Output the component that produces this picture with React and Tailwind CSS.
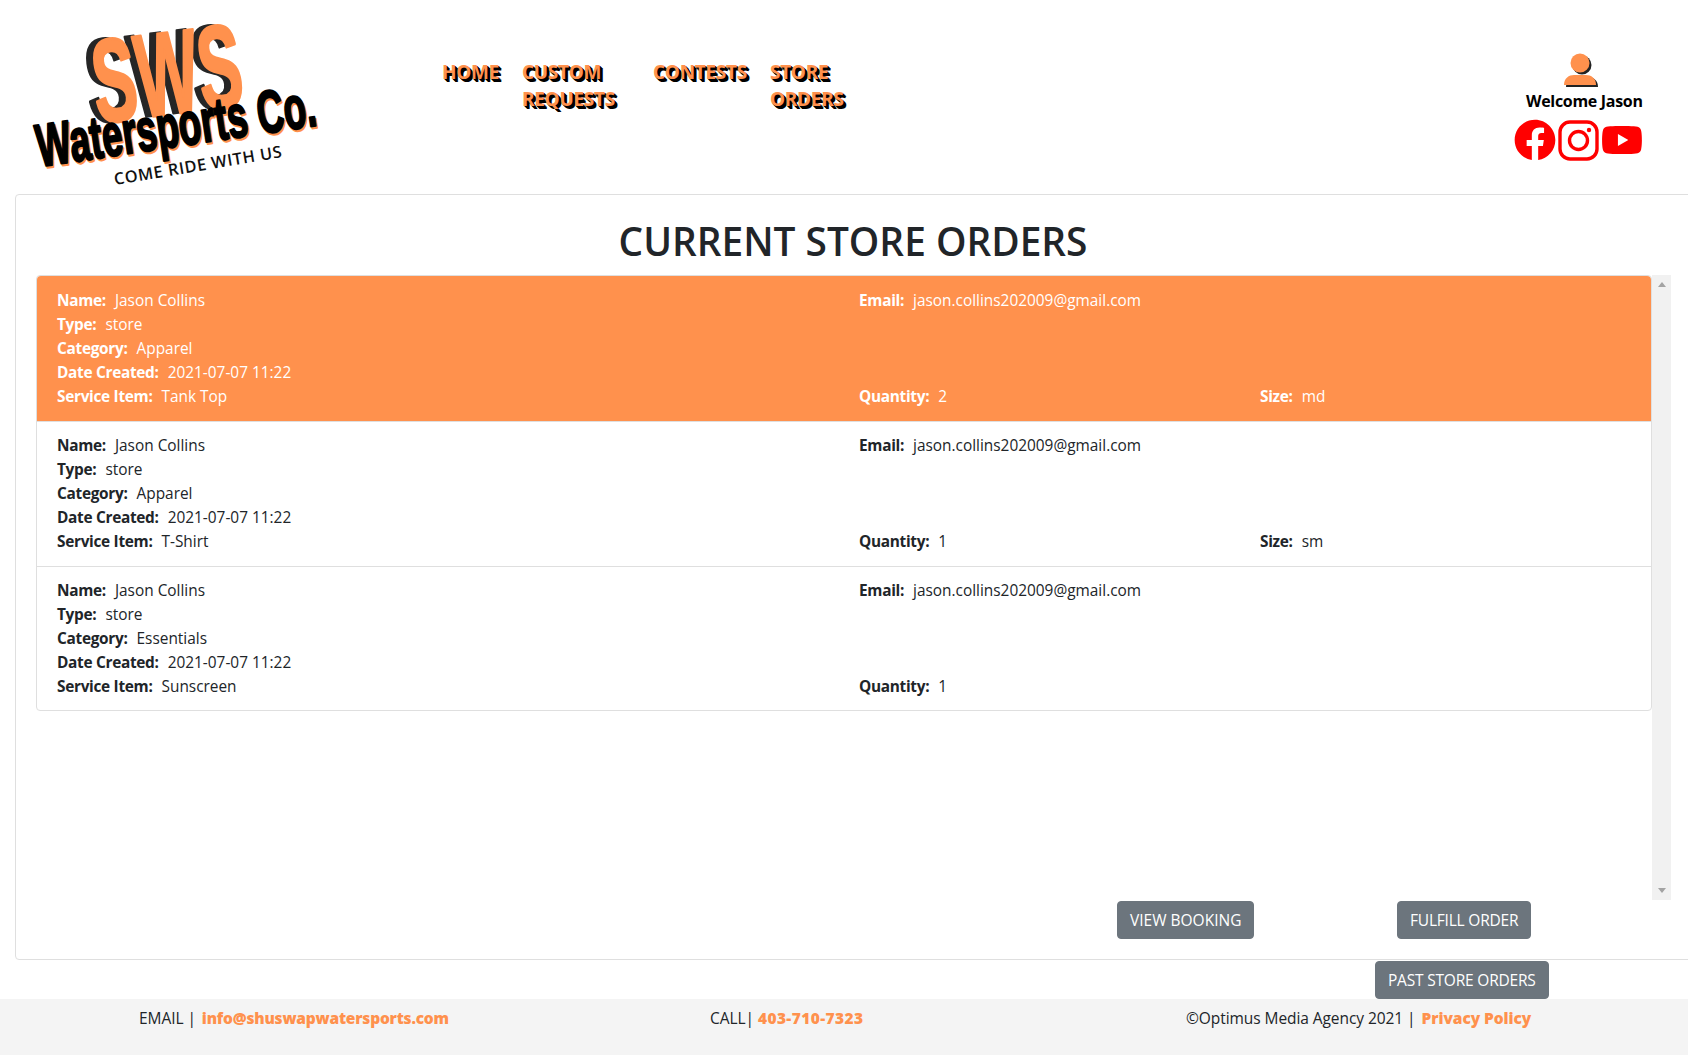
import { FaFacebook, FaYoutube } from "react-icons/fa";

const orders = [
  { item: "Tank Top", category: "Apparel", qty: 2, size: "md", active: true },
  { item: "T-Shirt", category: "Apparel", qty: 1, size: "sm" },
  { item: "Sunscreen", category: "Essentials", qty: 1 },
];

function Field({ label, value }) {
  return (
    <div className="whitespace-nowrap">
      <span className="font-bold tracking-[-0.3px]">{label}:</span>
      <span className="ml-[9px]">{value}</span>
    </div>
  );
}

function Logo() {
  const bold = { fontFamily: "'Liberation Sans', sans-serif", fontWeight: 700, textAnchor: "middle" };
  return (
    <svg width="340" height="190" viewBox="0 0 340 190" className="shrink-0">
      <g style={bold} fontSize="118" strokeWidth="3" strokeLinejoin="round">
        <text transform="translate(165 114) rotate(-7)" textLength="150" lengthAdjust="spacingAndGlyphs" fill="#262626" stroke="#262626">SWS</text>
        <text transform="translate(172 114) rotate(-7)" textLength="150" lengthAdjust="spacingAndGlyphs" fill="#ff914d" stroke="#ff914d">SWS</text>
      </g>
      <g style={bold} fontSize="60" strokeWidth="2.2" strokeLinejoin="round">
        <text transform="translate(180.5 148) rotate(-8.5)" textLength="282" lengthAdjust="spacingAndGlyphs" fill="#ff914d" stroke="#ff914d">Watersports Co.</text>
        <text transform="translate(179 146) rotate(-8.5)" textLength="282" lengthAdjust="spacingAndGlyphs" fill="#000" stroke="#000">Watersports Co.</text>
      </g>
      <text transform="translate(199 171) rotate(-9.5)" fontFamily="'Open Sans', sans-serif" fontWeight="600" fontSize="16.4" letterSpacing="0.6" textAnchor="middle" fill="#111">COME RIDE WITH US</text>
    </svg>
  );
}

function NavLink({ className, children }) {
  return (
    <a className={`block font-bold text-[19px] leading-[27px] tracking-[-0.3px] text-[#ff914d] [text-shadow:1px_1px_0_#000,2px_2px_0_#000,3px_3px_0_#000] ${className}`}>
      {children}
    </a>
  );
}

function PersonIcon() {
  return (
    <svg width="36" height="34" viewBox="0 0 36 34" className="drop-shadow-[2px_2px_0_#222]">
      <circle cx="17" cy="10" r="9.5" fill="#ff914d" />
      <path d="M1 32c0-7 5-10 10-10h12c5 0 10 3 10 10z" fill="#ff914d" />
    </svg>
  );
}

function InstagramIcon() {
  return (
    <svg width="41" height="41" viewBox="0 0 41 41" fill="none" stroke="#ff0000" strokeWidth="3.4">
      <rect x="2" y="2" width="37" height="37" rx="10" />
      <circle cx="20.5" cy="20.5" r="9" />
      <circle cx="31" cy="10" r="2.2" fill="#ff0000" stroke="none" />
    </svg>
  );
}

function OrderRow({ order }) {
  const { active, category, item, qty, size } = order;
  return (
    <div className={`grid grid-cols-[802px_401px_1fr] px-5 leading-[24px] ${active ? "bg-[#ff914d] text-white rounded-t pt-[13px] pb-[12px]" : "border-t border-[#dfdfdf] pt-[12px] pb-[12px] last:pb-[11px]"}`}>
      <div>
        <Field label="Name" value="Jason Collins" />
        <Field label="Type" value="store" />
        <Field label="Category" value={category} />
        <Field label="Date Created" value="2021-07-07 11:22" />
        <Field label="Service Item" value={item} />
      </div>
      <div className="flex flex-col justify-between">
        <Field label="Email" value="jason.collins202009@gmail.com" />
        <Field label="Quantity" value={qty} />
      </div>
      <div className="flex flex-col justify-end">
        {size && <Field label="Size" value={size} />}
      </div>
    </div>
  );
}

function Button({ className, children }) {
  return (
    <button className={`h-[38px] px-[12px] pt-px bg-[#6c757d] text-white rounded text-[15.5px] whitespace-nowrap border border-[#6c757d] ${className}`}>
      {children}
    </button>
  );
}

export default function App() {
  return (
    <div className="w-[1688px] h-[1056px] overflow-hidden bg-white text-[#212529] text-[15.4px] font-['Open_Sans',sans-serif]">
      <header className="h-[194px] flex">
        <div className="w-[442px] shrink-0">
          <Logo />
        </div>
        <nav className="flex pt-[59px] h-min">
          <NavLink className="w-[80px]">HOME</NavLink>
          <NavLink className="w-[131px]">CUSTOM<br />REQUESTS</NavLink>
          <NavLink className="w-[117px]">CONTESTS</NavLink>
          <NavLink className="w-[100px]">STORE<br />ORDERS</NavLink>
        </nav>
        <div className="ml-auto w-[174px] flex flex-col pt-[53px]">
          <div className="pl-[49px] h-[34px]"><PersonIcon /></div>
          <div className="pl-[12px] mt-[2px] text-[16px] leading-[24px] font-bold text-black whitespace-nowrap tracking-[-0.3px]">Welcome Jason</div>
          <div className="flex items-center gap-[2px] mt-[6px] text-[#ff0000]">
            <FaFacebook size={42} />
            <InstagramIcon />
            <FaYoutube size={42} className="-mt-[1px]" />
          </div>
        </div>
      </header>

      <main className="ml-[15px] w-[1700px] h-[766px] border border-[#dfdfdf] rounded pl-[20px] pt-[18px]">
        <h1 className="w-[1634px] h-[62px] text-center text-[38.8px] leading-[57px] font-semibold">CURRENT STORE ORDERS</h1>
        <div className="flex">
          <div className="w-[1616px] h-[625px]">
            <div className="border border-[#dfdfdf] rounded">
              {orders.map((order) => (
                <OrderRow key={order.item} order={order} />
              ))}
            </div>
          </div>
          <div className="w-[19px] h-[625px] bg-[#f1f1f1] flex flex-col items-center justify-between py-[7px]">
            <div className="w-0 h-0 border-x-[4px] border-x-transparent border-b-[5px] border-b-[#a3a3a3]" />
            <div className="w-0 h-0 border-x-[4px] border-x-transparent border-t-[5px] border-t-[#a3a3a3]" />
          </div>
        </div>
        <div className="flex pl-[1081px] mt-px">
          <div className="w-[280px]"><Button>VIEW BOOKING</Button></div>
          <Button className="tracking-[-0.2px]">FULFILL ORDER</Button>
        </div>
      </main>

      <div className="flex pl-[1375px] pt-px">
        <Button className="tracking-[-0.2px]">PAST STORE ORDERS</Button>
      </div>

      <footer className="h-[56px] bg-[#f4f4f4] flex pl-[139px] pt-[7px] leading-[24px] text-[15.5px] tracking-[-0.07px]">
        <div className="w-[571px]">EMAIL |<a className="ml-[6px] font-extrabold tracking-[-0.2px] text-[#ff914d]">info@shuswapwatersports.com</a></div>
        <div className="w-[476px]">CALL|<a className="ml-[4px] font-extrabold tracking-[0.4px] text-[#ff914d]">403-710-7323</a></div>
        <div>©Optimus Media Agency 2021 |<a className="ml-[6px] font-extrabold text-[#ff914d]">Privacy Policy</a></div>
      </footer>
    </div>
  );
}
